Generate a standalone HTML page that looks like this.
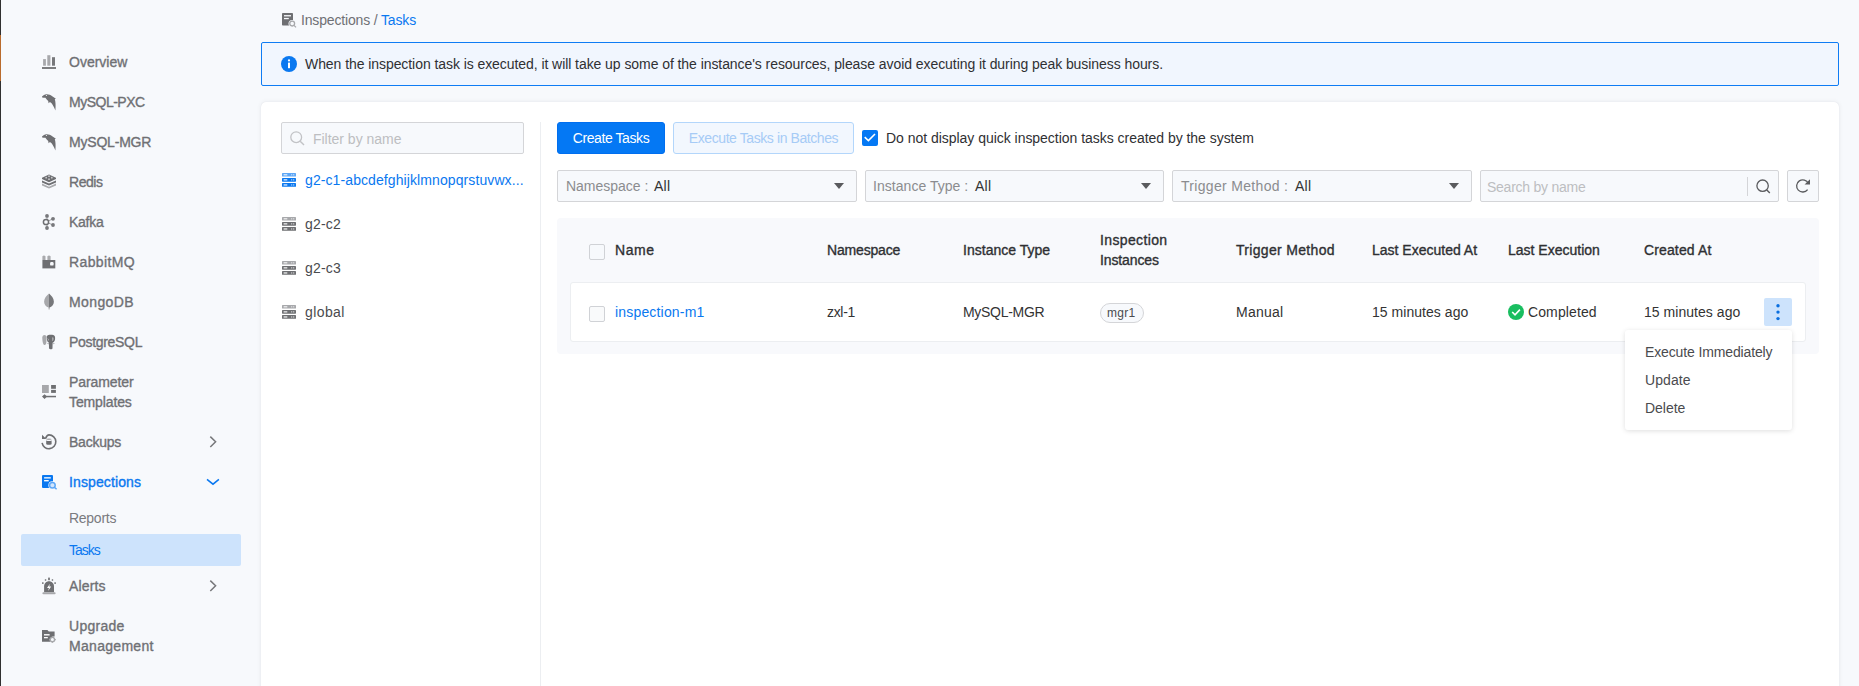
<!DOCTYPE html>
<html><head><meta charset="utf-8">
<style>
*{box-sizing:border-box;margin:0;padding:0}
html,body{width:1859px;height:686px;overflow:hidden}
body{background:#f7f9fc;font-family:"Liberation Sans",sans-serif;font-size:14px;color:#333;position:relative}
.a{position:absolute;white-space:nowrap;line-height:20px}
svg{position:absolute;overflow:visible}
.lb{position:absolute;left:0;top:0;width:1px;height:686px;background:#303030}
.lbo{position:absolute;left:0;top:35px;width:1px;height:46px;background:#b96b2d}
.nav{color:#6f7074;-webkit-text-stroke:0.35px #6f7074}
.card{position:absolute;left:261px;top:102px;width:1578px;height:620px;background:#fff;border-radius:5px;box-shadow:0 0 1px rgba(0,0,40,.10),0 0 5px rgba(0,0,40,.07)}
.alert{position:absolute;left:261px;top:42px;width:1578px;height:44px;background:#f1f6fe;border:1.5px solid #0f7cf4;border-radius:2px}
.btnp{position:absolute;left:557px;top:122px;width:108px;height:32px;background:#0478f4;border:1px solid #006eef;border-radius:3px;color:#fff;line-height:30px;text-align:center;letter-spacing:-0.41px}
.btnd{position:absolute;left:673px;top:122px;width:181px;height:32px;background:#f2f7fe;border:1px solid #b3d6fb;border-radius:3px;color:#a6cbf6;line-height:30px;text-align:center;letter-spacing:-0.41px}
.sel{position:absolute;top:170px;height:32px;background:#f7f9fc;border:1px solid #d4d5d8;border-radius:2px}
.lab{color:#8b8c8f}
.caret{position:absolute;width:0;height:0;border-left:5.5px solid transparent;border-right:5.5px solid transparent;border-top:6px solid #5a5b5e;top:183px}
.tbl{position:absolute;left:557px;top:218px;width:1262px;height:136px;background:#f8f9fc;border-radius:4px}
.row{position:absolute;left:570px;top:282px;width:1236px;height:60px;background:#fff;border:1px solid #eceef1;border-radius:3px}
.th{color:#2f3033;-webkit-text-stroke:0.35px #2f3033}
.td{color:#333}
.cb{position:absolute;width:16px;height:16px;border:1px solid #d0d2d6;border-radius:2px;background:#f7f9fc}
.menu{position:absolute;left:1625px;top:330px;width:167px;height:100px;background:#fff;border-radius:3px;box-shadow:0 1px 5px rgba(0,0,0,.13)}
.mi{position:absolute;left:20px;color:#4a4b4e;white-space:nowrap;line-height:20px}
</style></head><body>
<div class="lb"></div><div class="lbo"></div>

<!-- ============ SIDEBAR ============ -->
<!-- Overview icon -->
<svg style="left:42px;top:55px" width="14" height="14" viewBox="0 0 14 14">
<rect x="1.1" y="4.1" width="2.8" height="6.6" fill="#a7a8ab"/>
<rect x="5.3" y="0.2" width="3.1" height="10.5" fill="#a7a8ab"/>
<rect x="10" y="2.2" width="3" height="8.5" fill="#77787b"/>
<rect x="0" y="12.1" width="14" height="1.8" fill="#6e6f72"/>
</svg>
<div class="a nav" style="left:69px;top:52px">Overview</div>

<!-- dolphin icons -->
<svg style="left:42px;top:94px" width="14" height="16" viewBox="0 0 14 16">
<path d="M0,2.6 C1.2,1.3 2.6,0.3 4.4,0.2 C6.6,0.1 8.6,0.8 10.6,2.5 L13.9,4.8 L12.8,5.2 C13.6,7.4 13.8,11 13.4,16.4 C12.6,14.2 11.7,12.3 10.7,10.9 C9.7,9.5 8.9,8.6 7.9,8.1 L6.6,9.2 L6.2,6.9 C5.2,6.2 4.2,5.1 3.4,3.8 C2.2,3.8 1,3.8 0.2,3.6 Z" fill="#6e6f72"/>
<circle cx="4.4" cy="1.5" r="0.6" fill="#f7f9fc"/>
</svg>
<div class="a nav" style="left:69px;top:92px;letter-spacing:-0.5px">MySQL-PXC</div>
<svg style="left:42px;top:134px" width="14" height="16" viewBox="0 0 14 16">
<path d="M0,2.6 C1.2,1.3 2.6,0.3 4.4,0.2 C6.6,0.1 8.6,0.8 10.6,2.5 L13.9,4.8 L12.8,5.2 C13.6,7.4 13.8,11 13.4,16.4 C12.6,14.2 11.7,12.3 10.7,10.9 C9.7,9.5 8.9,8.6 7.9,8.1 L6.6,9.2 L6.2,6.9 C5.2,6.2 4.2,5.1 3.4,3.8 C2.2,3.8 1,3.8 0.2,3.6 Z" fill="#6e6f72"/>
<circle cx="4.4" cy="1.5" r="0.6" fill="#f7f9fc"/>
</svg>
<div class="a nav" style="left:69px;top:132px;letter-spacing:-0.2px">MySQL-MGR</div>

<!-- redis -->
<svg style="left:42px;top:174px" width="14" height="15" viewBox="0 0 14 15">
<path d="M0,9.6 L7,12.8 L14,9.6 L14,11.4 L7,14.6 L0,11.4 Z" fill="#a9aaad"/>
<path d="M0,6.4 L7,9.6 L14,6.4 L14,8.4 L7,11.6 L0,8.4 Z" fill="#6e6f72"/>
<path d="M7,0.6 L14,3.8 L14,5 L7,8.3 L0,5 L0,3.8 Z" fill="#6e6f72"/>
<circle cx="7" cy="2.2" r="0.9" fill="#c9cacc"/><circle cx="4.2" cy="3.7" r="0.9" fill="#c9cacc"/><circle cx="9.8" cy="3.7" r="0.9" fill="#c9cacc"/><circle cx="7" cy="5.2" r="0.9" fill="#c9cacc"/>
</svg>
<div class="a nav" style="left:69px;top:172px;letter-spacing:-0.45px">Redis</div>

<!-- kafka -->
<svg style="left:42px;top:214px" width="14" height="16" viewBox="0 0 14 16">
<path d="M5,2 L5,14 M4,8 L11,4.8 M4,8 L11,11" stroke="#77787b" stroke-width="0.7" fill="none"/>
<circle cx="4" cy="8" r="2.6" stroke="#6e6f72" stroke-width="1.5" fill="#f7f9fc"/>
<circle cx="5" cy="1.9" r="1.9" fill="#77787b"/><circle cx="5" cy="14" r="1.9" fill="#77787b"/>
<circle cx="11" cy="4.8" r="1.9" fill="#77787b"/><circle cx="11" cy="11" r="1.9" fill="#77787b"/>
</svg>
<div class="a nav" style="left:69px;top:212px;letter-spacing:-0.25px">Kafka</div>

<!-- rabbitmq -->
<svg style="left:42px;top:254px" width="14" height="15" viewBox="0 0 14 15">
<path d="M0.4,6 L0.4,2.2 Q1.9,0.8 3.5,2.2 L3.5,6 Z M5.4,6 L5.4,2.2 Q7,0.8 8.6,2.2 L8.6,6 Z" fill="#a9aaad"/>
<path d="M0.4,6 L13.3,6 L13.3,14.4 L0.4,14.4 Z " fill="#6e6f72"/>
<rect x="8.1" y="8.1" width="3.5" height="3.5" rx="1.2" fill="#f7f9fc"/>
</svg>
<div class="a nav" style="left:69px;top:252px;letter-spacing:0.38px">RabbitMQ</div>

<!-- mongodb -->
<svg style="left:43px;top:293px" width="12" height="17" viewBox="0 0 12 17">
<path d="M6,0.6 C3.6,2.6 1.1,5.3 1.1,8.8 C1.1,11.6 3.2,13.8 5.5,14.6 L5.6,16.6 L6,16.6 Z" fill="#a7a8ab"/>
<path d="M6,0.6 C8.4,2.6 10.9,5.3 10.9,8.8 C10.9,11.6 8.8,13.8 6.5,14.6 L6.4,16.6 L6,16.6 Z" fill="#77787b"/>
</svg>
<div class="a nav" style="left:69px;top:292px;letter-spacing:0.4px">MongoDB</div>

<!-- postgres -->
<svg style="left:42px;top:334px" width="14" height="16" viewBox="0 0 14 16">
<path d="M0.3,3.6 C0.3,1.6 1.4,0.9 2.6,0.9 C3.8,0.9 4.5,1.8 4.5,3.6 L4.4,8.4 C4,10.2 3.2,11.1 2.4,11.1 C1.2,11.1 0.3,7.8 0.3,3.6 Z" fill="#a7a8ab"/>
<path d="M4.8,2 C5.8,1 7.6,0.6 9.6,0.8 C11.4,0.6 13,1.4 13.1,3.4 C13.3,5.8 12.6,8 10.6,8.8 L10.5,14.2 C10.4,14.9 9.8,15.2 9,15.2 C8.2,15.2 7.2,14.9 7,14.2 L6.9,8.6 C5.8,8.2 5.1,7 4.9,5.4 Z" fill="#6e6f72"/>
<path d="M11.2,3.6 C11.6,4.8 11.5,6 10.9,7 L10.3,6.6 C10.5,5.6 10.5,4.6 10.2,3.5 Z" fill="#c9cacc"/>
<path d="M5.4,4 C5.7,5.4 6.2,6.4 6.9,7 L6.9,5.4 C6.5,4.9 6,4.4 5.4,4 Z" fill="#b5b6b9"/>
<path d="M10.6,9.3 L13.2,9.8 L10.6,10.3 Z M6.9,9.3 L4.6,9.8 L6.9,10.3 Z" fill="#8e8f92"/>
</svg>
<div class="a nav" style="left:69px;top:332px;letter-spacing:-0.31px">PostgreSQL</div>

<!-- param templates -->
<svg style="left:42px;top:384px" width="14" height="16" viewBox="0 0 14 16">
<rect x="0" y="1" width="6.8" height="8" fill="#a7a8ab"/>
<rect x="9.1" y="1" width="4.8" height="3.8" fill="#6e6f72"/>
<rect x="9.1" y="5.9" width="4.8" height="3" fill="#6e6f72"/>
<rect x="1" y="11.8" width="13" height="1.5" fill="#6e6f72"/>
<path d="M0,12.5 L2.6,10.2 L5,12.5 L2.6,14.9 Z" fill="#6e6f72"/>
</svg>
<div class="a nav" style="left:69px;top:372px;line-height:20px;white-space:nowrap"><span style="letter-spacing:-0.1px">Parameter</span><br><span style="letter-spacing:-0.12px">Templates</span></div>

<!-- backups -->
<svg style="left:41px;top:434px" width="16" height="16" viewBox="0 0 16 16">
<path d="M4.6,4.4 C5.4,2.4 6.4,0.9 8,0.9 A6.9,6.9 0 1 1 1.1,8.9" stroke="#6e6f72" stroke-width="1.6" fill="none"/>
<path d="M1,0.8 L1,5 L5.4,5 Z" fill="#6e6f72"/>
<ellipse cx="7.9" cy="5.3" rx="2.7" ry="0.8" fill="#a7a8ab"/>
<path d="M5.2,6.4 Q7.9,7.5 10.6,6.4 L10.6,10.2 Q7.9,11.4 5.2,10.2 Z" fill="#6e6f72"/>
</svg>
<div class="a nav" style="left:69px;top:432px;letter-spacing:-0.23px">Backups</div>
<svg style="left:209px;top:436px" width="8" height="12" viewBox="0 0 8 12">
<path d="M1.3,0.6 L6.6,5.8 L1.3,11" stroke="#77787b" stroke-width="1.5" fill="none"/>
</svg>

<!-- inspections -->
<svg style="left:42px;top:474px" width="15" height="16" viewBox="0 0 15 16">
<rect x="0" y="1" width="11" height="13" rx="1" fill="#0a78f0"/>
<rect x="2.1" y="3.2" width="6.7" height="1.3" fill="#fff"/>
<rect x="2.1" y="6" width="4.6" height="1.4" fill="#fff"/>
<circle cx="10.4" cy="11.2" r="4" fill="#fff"/>
<circle cx="10.4" cy="11.2" r="2.8" stroke="#5ea7f6" stroke-width="1.5" fill="#d3e6fd"/>
<path d="M12.4,13.2 L14.6,15.3" stroke="#5ea7f6" stroke-width="1.5"/>
</svg>
<div class="a nav" style="left:69px;top:472px;letter-spacing:0.12px;color:#0a78f0;-webkit-text-stroke:0.35px #0a78f0">Inspections</div>
<svg style="left:206px;top:478px" width="14" height="8" viewBox="0 0 14 8">
<path d="M1,1.3 L7,6.2 L12.9,1.3" stroke="#0a78f0" stroke-width="1.5" fill="none"/>
</svg>

<div class="a" style="left:69px;top:508px;color:#7a7b7f;letter-spacing:-0.27px">Reports</div>
<div class="a" style="left:21px;top:534px;width:220px;height:32px;background:#cde3fc;border-radius:2px"></div>
<div class="a" style="left:69px;top:540px;color:#0a78f0;letter-spacing:-1px">Tasks</div>

<!-- alerts -->
<svg style="left:42px;top:577px" width="14" height="18" viewBox="0 0 14 18">
<path d="M2.1,15.3 L2.1,9.5 C2.1,6.5 4.3,4.3 7,4.3 C9.7,4.3 12,6.5 12,9.5 L12,15.3 Z" fill="#6e6f72"/>
<path d="M7.9,6.8 L5,11 L7,11 L6,14 L9.2,9.6 L7.2,9.6 Z" fill="#fff"/>
<rect x="0.4" y="15.3" width="13.2" height="2" rx="1" fill="#a7a8ab"/>
<rect x="6.1" y="0.6" width="1.8" height="2.6" fill="#77787b"/>
<rect x="2.8" y="2.3" width="1.5" height="1.5" transform="rotate(45 3.55 3.05)" fill="#77787b"/>
<rect x="9.7" y="2.3" width="1.5" height="1.5" transform="rotate(45 10.45 3.05)" fill="#77787b"/>
<rect x="0" y="5.3" width="1.6" height="1.6" fill="#77787b"/>
<rect x="12.3" y="5.3" width="1.6" height="1.6" fill="#77787b"/>
</svg>
<div class="a nav" style="left:69px;top:576px;letter-spacing:0.14px">Alerts</div>
<svg style="left:209px;top:580px" width="8" height="12" viewBox="0 0 8 12">
<path d="M1.3,0.6 L6.6,5.8 L1.3,11" stroke="#77787b" stroke-width="1.5" fill="none"/>
</svg>

<!-- upgrade mgmt -->
<svg style="left:42px;top:629px" width="15" height="14" viewBox="0 0 15 14">
<path d="M0,1 L5.4,1 L6.8,2.6 L12.6,2.6 L12.6,7.6 C11.6,7.4 10.2,7.6 9.2,8.6 C8.2,9.6 7.8,11 8,12.8 L0,12.8 Z" fill="#6e6f72"/>
<rect x="2" y="5.1" width="5.6" height="1.4" fill="#fff"/>
<rect x="2" y="8" width="3.8" height="1.3" fill="#fff"/>
<circle cx="10.4" cy="10.6" r="2.2" stroke="#a7a8ab" stroke-width="1.4" fill="none"/>
<path d="M10.4,7.2 L10.4,8 M10.4,13.2 L10.4,14 M7,10.6 L7.8,10.6 M13,10.6 L13.8,10.6" stroke="#a7a8ab" stroke-width="1.2"/>
</svg>
<div class="a nav" style="left:69px;top:616px;line-height:20px"><span style="letter-spacing:0.27px">Upgrade</span><br><span style="letter-spacing:0.3px">Management</span></div>

<!-- ============ BREADCRUMB ============ -->
<svg style="left:282px;top:13px" width="15" height="15" viewBox="0 0 15 15">
<rect x="0" y="0" width="11" height="12.6" rx="0.8" fill="#6e6f72"/>
<rect x="2" y="2.1" width="7" height="1.3" fill="#f7f9fc"/>
<rect x="2" y="4.9" width="4.8" height="1.3" fill="#f7f9fc"/>
<circle cx="10.2" cy="10.6" r="3.7" fill="#f7f9fc"/>
<circle cx="10.2" cy="10.6" r="2.4" stroke="#a7a8ab" stroke-width="1.3" fill="#f7f9fc"/>
<path d="M12,12.4 L14,14.4" stroke="#a7a8ab" stroke-width="1.3"/>
</svg>
<div class="a" style="left:301px;top:10px;color:#6f7074;letter-spacing:-0.16px">Inspections / <span style="color:#0a78f0">Tasks</span></div>

<!-- ============ ALERT ============ -->
<div class="alert"></div>
<svg style="left:281px;top:56px" width="16" height="16" viewBox="0 0 16 16">
<circle cx="8" cy="8" r="8" fill="#0a78f0"/>
<rect x="7" y="6.6" width="2" height="5.6" fill="#fff"/>
<circle cx="8" cy="4.4" r="1.1" fill="#fff"/>
</svg>
<div class="a" style="left:305px;top:54px;color:#2f3033;letter-spacing:-0.066px">When the inspection task is executed, it will take up some of the instance's resources, please avoid executing it during peak business hours.</div>

<!-- ============ CARD ============ -->
<div class="card"></div>
<div class="a" style="left:540px;top:122px;width:1px;height:564px;background:#eceef1"></div>

<div class="a" style="left:281px;top:122px;width:243px;height:32px;background:#f7f9fc;border:1px solid #d4d5d8;border-radius:2px"></div>
<svg style="left:290px;top:131px" width="15" height="15" viewBox="0 0 15 15">
<circle cx="6.2" cy="6.2" r="5.4" stroke="#c2c3c6" stroke-width="1.3" fill="none"/>
<path d="M10.2,10.2 L14,14" stroke="#c2c3c6" stroke-width="1.4"/>
</svg>
<div class="a" style="left:313px;top:129px;color:#bdbec1;letter-spacing:-0.02px">Filter by name</div>

<svg style="left:282px;top:172px" width="14" height="15" viewBox="0 0 14 15">
<rect x="0" y="1" width="14" height="3.6" rx="0.6" fill="#5ea7f6"/>
<rect x="0" y="6" width="14" height="3.7" rx="0.6" fill="#0a78f0"/>
<rect x="0" y="11" width="14" height="3.8" rx="0.6" fill="#0a78f0"/>
<g fill="#fff" opacity="0.85"><rect x="1.6" y="2.2" width="3.7" height="1.2"/><rect x="9.3" y="2.2" width="0.9" height="1.2"/><rect x="11.3" y="2.2" width="0.9" height="1.2"/>
<rect x="1.6" y="7.2" width="3.7" height="1.3"/><rect x="9.3" y="7.2" width="0.9" height="1.3"/><rect x="11.3" y="7.2" width="0.9" height="1.3"/>
<rect x="1.6" y="12.3" width="3.7" height="1.3"/><rect x="9.3" y="12.3" width="0.9" height="1.3"/><rect x="11.3" y="12.3" width="0.9" height="1.3"/></g>
</svg>
<div class="a" style="left:305px;top:170px;color:#0a78f0;letter-spacing:0.094px">g2-c1-abcdefghijklmnopqrstuvwx...</div>

<svg style="left:282px;top:216px" width="14" height="15" viewBox="0 0 14 15">
<rect x="0" y="1" width="14" height="3.6" rx="0.6" fill="#a7a8ab"/>
<rect x="0" y="6" width="14" height="3.7" rx="0.6" fill="#6e6f72"/>
<rect x="0" y="11" width="14" height="3.8" rx="0.6" fill="#6e6f72"/>
<g fill="#fff" opacity="0.85"><rect x="1.6" y="2.2" width="3.7" height="1.2"/><rect x="9.3" y="2.2" width="0.9" height="1.2"/><rect x="11.3" y="2.2" width="0.9" height="1.2"/>
<rect x="1.6" y="7.2" width="3.7" height="1.3"/><rect x="9.3" y="7.2" width="0.9" height="1.3"/><rect x="11.3" y="7.2" width="0.9" height="1.3"/>
<rect x="1.6" y="12.3" width="3.7" height="1.3"/><rect x="9.3" y="12.3" width="0.9" height="1.3"/><rect x="11.3" y="12.3" width="0.9" height="1.3"/></g>
</svg>
<div class="a" style="left:305px;top:214px;color:#4a4b4e;letter-spacing:0.2px">g2-c2</div>

<svg style="left:282px;top:260px" width="14" height="15" viewBox="0 0 14 15">
<rect x="0" y="1" width="14" height="3.6" rx="0.6" fill="#a7a8ab"/>
<rect x="0" y="6" width="14" height="3.7" rx="0.6" fill="#6e6f72"/>
<rect x="0" y="11" width="14" height="3.8" rx="0.6" fill="#6e6f72"/>
<g fill="#fff" opacity="0.85"><rect x="1.6" y="2.2" width="3.7" height="1.2"/><rect x="9.3" y="2.2" width="0.9" height="1.2"/><rect x="11.3" y="2.2" width="0.9" height="1.2"/>
<rect x="1.6" y="7.2" width="3.7" height="1.3"/><rect x="9.3" y="7.2" width="0.9" height="1.3"/><rect x="11.3" y="7.2" width="0.9" height="1.3"/>
<rect x="1.6" y="12.3" width="3.7" height="1.3"/><rect x="9.3" y="12.3" width="0.9" height="1.3"/><rect x="11.3" y="12.3" width="0.9" height="1.3"/></g>
</svg>
<div class="a" style="left:305px;top:258px;color:#4a4b4e;letter-spacing:0.2px">g2-c3</div>

<svg style="left:282px;top:304px" width="14" height="15" viewBox="0 0 14 15">
<rect x="0" y="1" width="14" height="3.6" rx="0.6" fill="#a7a8ab"/>
<rect x="0" y="6" width="14" height="3.7" rx="0.6" fill="#6e6f72"/>
<rect x="0" y="11" width="14" height="3.8" rx="0.6" fill="#6e6f72"/>
<g fill="#fff" opacity="0.85"><rect x="1.6" y="2.2" width="3.7" height="1.2"/><rect x="9.3" y="2.2" width="0.9" height="1.2"/><rect x="11.3" y="2.2" width="0.9" height="1.2"/>
<rect x="1.6" y="7.2" width="3.7" height="1.3"/><rect x="9.3" y="7.2" width="0.9" height="1.3"/><rect x="11.3" y="7.2" width="0.9" height="1.3"/>
<rect x="1.6" y="12.3" width="3.7" height="1.3"/><rect x="9.3" y="12.3" width="0.9" height="1.3"/><rect x="11.3" y="12.3" width="0.9" height="1.3"/></g>
</svg>
<div class="a" style="left:305px;top:302px;color:#4a4b4e;letter-spacing:0.4px">global</div>

<!-- toolbar -->
<div class="btnp">Create Tasks</div>
<div class="btnd">Execute Tasks in Batches</div>
<svg style="left:862px;top:130px" width="16" height="16" viewBox="0 0 16 16">
<rect x="0" y="0" width="16" height="16" rx="2" fill="#0478f4"/>
<path d="M2.7,7.2 L6.4,10.6 L13,4" stroke="#fff" stroke-width="1.6" fill="none"/>
</svg>
<div class="a" style="left:886px;top:128px;color:#2f3033;letter-spacing:-0.03px">Do not display quick inspection tasks created by the system</div>

<!-- selects -->
<div class="sel" style="left:557px;width:300px"></div>
<div class="a" style="left:566px;top:176px"><span class="lab" style="letter-spacing:-0.02px">Namespace :</span></div>
<div class="a" style="left:654px;top:176px;letter-spacing:0.25px">All</div>
<i class="caret" style="left:834px"></i>

<div class="sel" style="left:865px;width:299px"></div>
<div class="a" style="left:873px;top:176px"><span class="lab" style="letter-spacing:0.04px">Instance Type :</span></div>
<div class="a" style="left:975px;top:176px;letter-spacing:0.25px">All</div>
<i class="caret" style="left:1141px"></i>

<div class="sel" style="left:1172px;width:300px"></div>
<div class="a" style="left:1181px;top:176px"><span class="lab" style="letter-spacing:0.32px">Trigger Method :</span></div>
<div class="a" style="left:1295px;top:176px;letter-spacing:0.25px">All</div>
<i class="caret" style="left:1449px"></i>

<div class="sel" style="left:1480px;width:299px"></div>
<div class="a" style="left:1487px;top:177px;color:#bdbec1;letter-spacing:-0.25px">Search by name</div>
<div class="a" style="left:1747px;top:177px;width:1px;height:19px;background:#d4d5d8"></div>
<svg style="left:1755px;top:179px" width="16" height="16" viewBox="0 0 16 16">
<circle cx="7.6" cy="6.7" r="5.7" stroke="#5a5b5e" stroke-width="1.3" fill="none"/>
<path d="M11.6,10.8 L14.8,14" stroke="#5a5b5e" stroke-width="1.4"/>
</svg>

<div class="sel" style="left:1787px;width:32px"></div>
<svg style="left:1795px;top:178px" width="16" height="16" viewBox="0 0 16 16">
<path d="M13.3,5.4 A6.1,6.1 0 1 0 12.6,11.6" stroke="#5a5b5e" stroke-width="1.3" fill="none"/>
<path d="M15,1.2 L15,6.4 L9.6,6.4 Z" fill="#5a5b5e"/>
</svg>

<!-- table -->
<div class="tbl"></div>
<div class="cb" style="left:589px;top:244px"></div>
<div class="a th" style="left:615px;top:240px;letter-spacing:0.57px">Name</div>
<div class="a th" style="left:827px;top:240px;letter-spacing:-0.17px">Namespace</div>
<div class="a th" style="left:963px;top:240px;letter-spacing:0.02px">Instance Type</div>
<div class="a th" style="left:1100px;top:230px"><span style="letter-spacing:0.37px">Inspection</span><br><span style="letter-spacing:-0.12px">Instances</span></div>
<div class="a th" style="left:1236px;top:240px;letter-spacing:0.32px">Trigger Method</div>
<div class="a th" style="left:1372px;top:240px">Last Executed At</div>
<div class="a th" style="left:1508px;top:240px">Last Execution</div>
<div class="a th" style="left:1644px;top:240px;letter-spacing:0.13px">Created At</div>

<div class="row"></div>
<div class="cb" style="left:589px;top:306px;background:#f9fafb"></div>
<div class="a td" style="left:615px;top:302px;color:#0a78f0;letter-spacing:0.18px">inspection-m1</div>
<div class="a td" style="left:827px;top:302px;letter-spacing:-0.32px">zxl-1</div>
<div class="a td" style="left:963px;top:302px;letter-spacing:-0.3px">MySQL-MGR</div>
<div class="a" style="left:1100px;top:303px;width:44px;height:20px;border:1px solid #d4d5d8;border-radius:10px;background:#f7f9fc"></div>
<div class="a" style="left:1107px;top:304px;font-size:12px;line-height:18px;color:#4a4b4e;letter-spacing:0.3px">mgr1</div>
<div class="a td" style="left:1236px;top:302px;letter-spacing:0.24px">Manual</div>
<div class="a td" style="left:1372px;top:302px;letter-spacing:0.04px">15 minutes ago</div>
<svg style="left:1508px;top:304px" width="16" height="16" viewBox="0 0 16 16">
<circle cx="8" cy="8" r="8" fill="#19be60"/>
<path d="M4.2,8 L7,10.8 L11.9,5.6" stroke="#fff" stroke-width="1.6" fill="none"/>
</svg>
<div class="a td" style="left:1528px;top:302px;letter-spacing:0.11px">Completed</div>
<div class="a td" style="left:1644px;top:302px;letter-spacing:0.04px">15 minutes ago</div>
<div class="a" style="left:1764px;top:298px;width:28px;height:28px;background:#cde3fc;border-radius:2px"></div>
<svg style="left:1764px;top:298px" width="28" height="28" viewBox="0 0 28 28">
<circle cx="14" cy="7.7" r="1.7" fill="#0a6fe0"/><circle cx="14" cy="14.1" r="1.7" fill="#0a6fe0"/><circle cx="14" cy="20.6" r="1.7" fill="#0a6fe0"/>
</svg>

<div class="menu">
<div class="mi" style="top:12px;letter-spacing:-0.13px">Execute Immediately</div>
<div class="mi" style="top:40px;letter-spacing:0.08px">Update</div>
<div class="mi" style="top:68px;letter-spacing:-0.04px">Delete</div>
</div>

</body></html>
